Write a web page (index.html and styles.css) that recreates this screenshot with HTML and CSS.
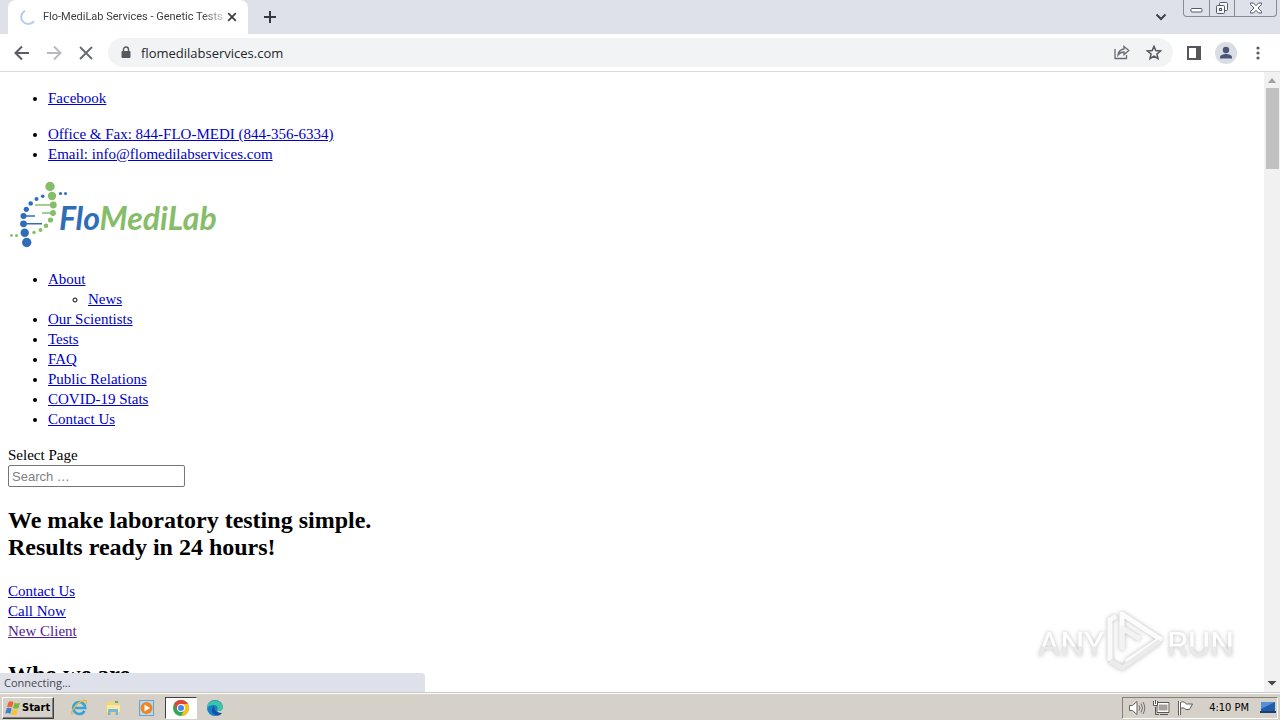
FILE: index.html
```html
<!DOCTYPE html>
<html lang="en">
<head>
<meta charset="utf-8">
<title>Flo-MediLab Services - Genetic Tests</title>
<link rel="stylesheet" href="styles.css">
</head>
<body>
<header class="tabstrip">
  <div class="tab">
    <svg class="spinner" width="16" height="16" viewBox="0 0 16 16"><path d="M5 1.8A7 7 0 1 0 14 12" fill="none" stroke="#b5cdf2" stroke-width="2"/></svg>
    <span class="tab-title">Flo-MediLab Services - Genetic Tests</span>
    <button class="icon-btn" aria-label="Close tab"><svg width="10" height="10" viewBox="0 0 10 10"><path d="M1.2 1.2l7.6 7.6M8.800 1.200l-7.600 7.600" stroke="#3c4043" stroke-width="1.8"/></svg></button>
  </div>
  <button class="icon-btn new-tab" aria-label="New tab"><svg width="12" height="12" viewBox="0 0 12 12"><path d="M6 0v12M0 6h12" stroke="#35383f" stroke-width="2"/></svg></button>
  <button class="icon-btn tab-search" aria-label="Search tabs"><svg width="12" height="8" viewBox="0 0 12 8"><path d="M1.500 1.500L6 6l4.500-4.500" fill="none" stroke="#3c4048" stroke-width="2"/></svg></button>
  <div class="window-controls">
    <button class="win-btn" aria-label="Minimize"><svg width="13" height="14" viewBox="0 0 13 14"><rect x="1" y="7.500" width="11" height="3.500" rx="1" fill="#fff" stroke="#565b66"/></svg></button>
    <button class="win-btn" aria-label="Restore"><svg width="14" height="14" viewBox="0 0 14 14"><g fill="#f4f5f8" stroke="#565b66"><rect x="4.500" y="1.500" width="8" height="8" rx="1"/><rect x="1.500" y="4.500" width="8" height="8" rx="1"/><rect x="4.500" y="7.500" width="2" height="2"/></g></svg></button>
    <button class="win-btn win-close" aria-label="Close"><svg width="14" height="12" viewBox="0 0 14 12"><path d="M1.500 1h3L7 3.700 9.500 1h3v1.500L9 6l3.500 3.500V11h-3L7 8.300 4.500 11h-3V9.500L5 6 1.500 2.500z" fill="#fff" stroke="#565b66"/></svg></button>
  </div>
</header>
<nav class="toolbar" aria-label="Browser">
  <button class="icon-btn" aria-label="Back"><svg width="16" height="16" viewBox="0 0 16 16"><path d="M15 8H2M8 1.500L1.500 8 8 14.500" fill="none" stroke="#5a5d61" stroke-width="2"/></svg></button>
  <button class="icon-btn" aria-label="Forward"><svg width="16" height="16" viewBox="0 0 16 16"><path d="M1 8h13M8 1.500L14.500 8 8 14.500" fill="none" stroke="#b8babd" stroke-width="2"/></svg></button>
  <button class="icon-btn" aria-label="Stop"><svg width="16" height="16" viewBox="0 0 16 16"><path d="M2 2l12 12M14 2L2 14" stroke="#66696d" stroke-width="1.800"/></svg></button>
  <div class="omnibox">
    <svg width="10" height="14" viewBox="0 0 10 14"><rect x="0.500" y="5" width="9" height="7" rx="1" fill="#55595e"/><path d="M2.500 6V3.500a2.500 2.500 0 0 1 5 0V6" fill="none" stroke="#55595e" stroke-width="1.400"/></svg>
    <input class="url" type="text" aria-label="Address" value="flomedilabservices.com">
    <button class="icon-btn" aria-label="Share"><svg width="16" height="16" viewBox="0 0 16 16"><path d="M1 4v9.500h11.500V10" fill="none" stroke="#686c71" stroke-width="1.300"/><path d="M10 1.500L14.800 5.500 10 9.500V7C7.500 7 5.500 8 4 10c.4-3.300 2.300-5.500 6-6z" fill="none" stroke="#686c71" stroke-width="1.300"/></svg></button>
    <button class="icon-btn" aria-label="Bookmark"><svg width="16" height="16" viewBox="0 0 16 16"><path d="M8 1.300l1.800 4.300 4.700.4-3.600 3 1.100 4.700L8 11.200l-4 2.500 1.100-4.700-3.600-3 4.700-.4z" fill="none" stroke="#55595e" stroke-width="1.500"/></svg></button>
  </div>
  <button class="icon-btn" aria-label="Side panel"><svg width="14" height="14" viewBox="0 0 14 14"><path d="M0 0h14v14H0zM2 2v10h7V2z" fill="#5a5658" fill-rule="evenodd"/></svg></button>
  <button class="icon-btn" aria-label="Profile"><svg width="22" height="22" viewBox="0 0 22 22"><circle cx="11" cy="11" r="11" fill="#dadde4"/><circle cx="11" cy="8" r="3.200" fill="#4a5577"/><path d="M5 16.500v-1.200C5 13 8.500 12 11 12s6 1 6 3.300v1.200z" fill="#4a5577"/></svg></button>
  <button class="icon-btn menu" aria-label="Menu"><svg width="4" height="14" viewBox="0 0 4 14"><g fill="#5a5d61"><circle cx="2" cy="2" r="1.600"/><circle cx="2" cy="7" r="1.600"/><circle cx="2" cy="12" r="1.600"/></g></svg></button>
</nav>
<div class="viewport">
  <main class="page">
    <ul class="list"><li><a href="#">Facebook</a></li></ul>
    <ul class="list">
      <li><a href="#">Office &amp; Fax: 844-FLO-MEDI (844-356-6334)</a></li>
      <li><a href="#">Email: info@flomedilabservices.com</a></li>
    </ul>
    <a class="logo" href="#" aria-label="FloMediLab">
      <svg width="210" height="70" viewBox="0 0 210 70">
        <g stroke-width="1.500"><path d="M27 25h18M34 33h11" stroke="#86c06c"/><path d="M15 36h12M15 43.800h19" stroke="#2f6db8"/></g>
        <g fill="#86bd68"><circle cx="42" cy="6.500" r="4.700"/><circle cx="44" cy="16" r="4.200"/><circle cx="45.300" cy="25" r="3.400"/><circle cx="45" cy="33" r="2.900"/><circle cx="42.500" cy="40" r="2.600"/><circle cx="38" cy="45.800" r="2.300"/><circle cx="32.500" cy="50" r="2"/><circle cx="26" cy="52.500" r="1.700"/><circle cx="8.500" cy="55.500" r="1.500"/><circle cx="3.500" cy="55.500" r="1.400"/></g>
        <g fill="#2f6db8"><circle cx="18.700" cy="62.500" r="4.700"/><circle cx="16.700" cy="52.700" r="4.200"/><circle cx="15.500" cy="43.800" r="3.400"/><circle cx="15.500" cy="36" r="3"/><circle cx="18.300" cy="29.300" r="2.600"/><circle cx="22.700" cy="23.500" r="2.300"/><circle cx="28.500" cy="19" r="2"/><circle cx="34.700" cy="16.300" r="1.800"/><circle cx="52.500" cy="13.500" r="1.600"/><circle cx="57.500" cy="13.500" r="1.500"/></g>
        <text class="logo-text" x="51" y="50"><tspan fill="#2f6db8">Flo</tspan><tspan fill="#86bd68">MediLab</tspan></text>
      </svg>
    </a>
    <ul class="list">
      <li><a href="#">About</a><ul><li><a href="#">News</a></li></ul></li>
      <li><a href="#">Our Scientists</a></li>
      <li><a href="#">Tests</a></li>
      <li><a href="#">FAQ</a></li>
      <li><a href="#">Public Relations</a></li>
      <li><a href="#">COVID-19 Stats</a></li>
      <li><a href="#">Contact Us</a></li>
    </ul>
    <label class="select-page" for="search">Select Page</label>
    <input class="search" id="search" type="search" placeholder="Search …">
    <h2 class="heading">We make laboratory testing simple.<br>Results ready in 24 hours!</h2>
    <div class="links">
      <a href="#">Contact Us</a>
      <a href="#">Call Now</a>
      <a class="visited" href="#">New Client</a>
    </div>
    <h2 class="heading">Who we are</h2>
  </main>
  <div class="scrollbar">
    <svg width="16" height="16" viewBox="0 0 16 16"><path d="M4 11l4-5 4 5z" fill="#a0a0a0"/></svg>
    <div class="thumb"></div>
    <svg class="scroll-down" width="16" height="16" viewBox="0 0 16 16"><path d="M3.500 5h9L8 9.500z" fill="#45484c"/></svg>
  </div>
  <div class="status">Connecting...</div>
  <svg class="watermark" width="210" height="72" viewBox="0 0 210 72" role="img" aria-label="ANY RUN">
    <defs><linearGradient id="wm" x1="0" y1="0" x2="0" y2="1"><stop offset="0.540" stop-color="#fff"/><stop offset="0.580" stop-color="#e9e9e9"/></linearGradient></defs>
    <g class="wm-text" fill="url(#wm)"><text x="8" y="50">ANY</text><text x="137" y="50">RUN</text></g>
    <g fill="none" stroke-width="5" stroke-linejoin="round"><path d="M80 55V14L86 10" stroke="#fafafa"/><path d="M92 44V8l38 25-34 23" stroke="#fcfcfc"/><path d="M80 55l12 7 38-27" stroke="#ebebeb"/><path d="M92 44V22l18 11" stroke="#f3f3f3"/></g>
  </svg>
</div>
<footer class="taskbar">
  <button class="start"><svg width="16" height="16" viewBox="0 0 16 16"><path d="M3.500 2c2-1.300 3.500-.8 5 .2L7 7.500C5.500 6.500 4 6.300 2 7.200z" fill="#ef6530"/><path d="M9.500 2.700c2 1 3.500 1 5.500 0L13.500 8c-2 1-3.500 1-5.500 0z" fill="#79b83c"/><path d="M1.700 8.300c2-1 3.500-.6 5 .3L5.300 14C4 13 2.500 12.700.3 13.600z" fill="#3d7fd1"/><path d="M7.700 9.200c2 1 3.500 1 5.400 0l-1.500 5.200c-2 1-3.500 1-5.400 0z" fill="#f8c532"/></svg>Start</button>
  <div class="launchers">
    <button class="launch" aria-label="Internet Explorer"><svg width="18" height="18" viewBox="0 0 18 18"><path d="M14.500 11.800a6 6 0 1 1 .7-2.800H5" fill="none" stroke="#35a4dc" stroke-width="2.600"/><path d="M2.500 16C-1 13.500 7 3 14 1.500c3-.5 3 1.500 1.800 3.500" fill="none" stroke="#e5b941" stroke-width="1.300"/></svg></button>
    <button class="launch" aria-label="Explorer"><svg width="18" height="18" viewBox="0 0 18 18"><path d="M2 4l6-2 2 2h5v11H2z" fill="#f1d679"/><path d="M3 6h13v7H3z" fill="#fae9a5"/><path d="M4 16v-5q0-1 1-1h8q1 0 1 1v5h-2.500v-3h-5v3z" fill="#72b9df"/><path d="M11 2h3v2h-3z" fill="#62ad66"/></svg></button>
    <button class="launch" aria-label="Media Player"><svg width="18" height="18" viewBox="0 0 18 18"><rect x="1.500" y="1.500" width="14" height="15" fill="#b8d8ed" stroke="#6aa4cc"/><circle cx="8.500" cy="9" r="6" fill="#ee8524"/><path d="M6.500 5.500l5.500 3.500-5.500 3.500z" fill="#fff"/></svg></button>
    <button class="launch active" aria-label="Chrome"><svg width="16" height="16" viewBox="0 0 16 16"><circle cx="8" cy="8" r="8" fill="#33a653"/><path d="M1.100 4A8 8 0 0 1 14.900 4L8 4.500 4.500 10z" fill="#e34335"/><path d="M14.900 4A8 8 0 0 1 8 16l3.500-6L8 4z" fill="#fbc116"/><circle cx="8" cy="8" r="4" fill="#fff"/><circle cx="8" cy="8" r="3" fill="#4285ee"/></svg></button>
    <button class="launch" aria-label="Edge"><svg width="18" height="18" viewBox="0 0 18 18"><circle cx="9" cy="9" r="8" fill="#167fcb"/><path d="M1 9C1 0 15-1 17 8c.5 4-5 5-6 3 1.500-2 0-5-3-5-3.500 0-6 1-7 3z" fill="#3cc5a5"/><path d="M8 7c-4 3-2 9 3.500 9.500 2.500 0 4-1.500 4.800-3C13 15 8 13 8 7z" fill="#174f9d"/><path d="M11 11c1 2 5 1 6-1.500l1 3-2 1.500c-3 0-5-1-5-3z" fill="#d5d0c8"/></svg></button>
  </div>
  <div class="tray">
    <svg width="18" height="16" viewBox="0 0 18 16"><path d="M1.500 5.500h3L9 1.500v13l-4.500-4h-3z" fill="#fff" stroke="#66625d"/><path d="M11 5.500q1.800 2.500 0 5M13 3.500q3 4.500 0 9M15 2q3.500 6 0 12" fill="none" stroke="#77736d"/></svg>
    <svg width="17" height="16" viewBox="0 0 17 16"><rect x="4.500" y="3.500" width="11" height="8" fill="#a5a29e" stroke="#fff" stroke-width="2"/><path d="M4 2.500h12v10H4zM7 14.500h8M2.500 7v7.500H6" fill="none" stroke="#59554f"/><path d="M.5 1v4.500h4V1M2.500 0v4" fill="#fff" stroke="#59554f"/></svg>
    <svg width="17" height="16" viewBox="0 0 17 16"><path d="M1.500 1v14.500M3.500 2v13" stroke="#605c57"/><path d="M2.500 1v14" stroke="#fff"/><path d="M3.500 2.500c3-1.500 4 0 6 1.500h6l-3 5.500H9c-2-2-3.500-2-5.500-1z" fill="#fff" stroke="#605c57"/></svg>
    <span class="clock">4:10 PM</span>
    <svg width="16" height="14" viewBox="0 0 16 14"><path d="M1 1h14v9H1z" fill="#245ca8"/><path d="M1 1h14L1 8z" fill="#548fd7"/><path d="M0 10h16v2H0z" fill="#183e78"/></svg>
  </div>
</footer>
</body>
</html>
```
FILE: styles.css
```css
* { box-sizing: border-box; }
body {
  margin: 0;
  height: 100vh;
  display: flex;
  flex-direction: column;
  overflow: hidden;
  background: #fff;
  color: #000;
  font-family: "Liberation Serif", serif;
  font-size: 15px;
  line-height: 20px;
}
button { font: inherit; color: inherit; padding: 0; border: 0; background: none; }
svg { display: block; flex: none; }
.icon-btn { display: flex; align-items: center; justify-content: center; flex: none; }

.tabstrip {
  display: flex;
  align-items: center;
  flex: none;
  height: 34px;
  padding: 0 3px 0 8px;
  background: #dee1e9;
}
.tab {
  display: flex;
  align-items: center;
  align-self: stretch;
  width: 240px;
  padding: 0 11px 0 12px;
  border-radius: 8px 8px 0 0;
  background: #fff;
}
.spinner { margin-right: 7px; }
.tab-title {
  flex: 1;
  overflow: hidden;
  white-space: nowrap;
  color: #3c4043;
  font: 11px/16px Roboto, sans-serif;
  mask-image: linear-gradient(to right, #000 88%, transparent 105%);
  margin-right: 4px;
}
.new-tab { margin-left: 16px; }
.tab-search { margin-left: auto; margin-right: 16px; }
.window-controls {
  display: flex;
  align-self: flex-start;
  height: 17px;
  border: 1px solid #868b96;
  border-top: 0;
  border-radius: 0 0 4px 4px;
}
.win-btn { display: flex; align-items: center; justify-content: center; width: 25px; }
.win-btn + .win-btn { border-left: 1px solid #868b96; }
.win-close { width: 42px; }

.toolbar {
  display: flex;
  align-items: center;
  flex: none;
  gap: 14px;
  height: 38px;
  padding: 0 20px 0 14px;
  border-bottom: 1px solid #d9dadc;
}
.toolbar > .icon-btn:nth-child(-n+2) { margin-right: 2px; }
.menu { margin-left: 5px; }
.omnibox {
  display: flex;
  align-items: center;
  flex: 1;
  gap: 16px;
  height: 29px;
  padding: 0 11px 0 13px;
  border-radius: 15px;
  background: #f1f3f5;
}
.url {
  flex: 1;
  min-width: 0;
  margin-left: -6px;
  padding: 0;
  border: 0;
  background: none;
  color: #24272b;
  font: 13px/20px "Open Sans", sans-serif;
}

.viewport { position: relative; display: flex; flex: 1; min-height: 0; }
.page { flex: 1; min-width: 0; padding: 0 8px; overflow: hidden; }
.list { margin: 16px 0; padding-left: 40px; }
.list ul { padding-left: 40px; margin: 0; }
a { color: #0000c8; }
.visited { color: #551a8b; }
.logo { display: block; height: 73px; }
.logo-text { font: italic bold 32px Lato, sans-serif; }
.select-page { display: block; }
.search {
  display: block;
  width: 177px;
  height: 22px;
  padding: 1px 3px;
  border: 1px solid #767676;
  border-radius: 2px;
  font: 13px "Liberation Sans", sans-serif;
  appearance: none;
}
.search::placeholder { color: #808080; }
.heading { margin: 20px 0; font-size: 24px; line-height: 27px; }
.links { display: flex; flex-direction: column; align-items: flex-start; }

.scrollbar { display: flex; flex-direction: column; width: 16px; background: #f1f1f1; }
.thumb { height: 81px; margin: 0 1px 0 2px; background: #c1c1c1; }
.scroll-down { margin-top: auto; }
.status {
  position: absolute;
  left: 0;
  bottom: 0;
  width: 425px;
  height: 19px;
  padding: 0 4px;
  border-radius: 0 4px 0 0;
  background: #dee1e9;
  color: #45484d;
  font: 11px/20px "Open Sans", sans-serif;
}
.watermark {
  position: absolute;
  right: 40px;
  bottom: 14px;
  filter: drop-shadow(0 0 2px #bbb);
}
.wm-text { font: 34px Roboto, sans-serif; }

.taskbar {
  display: flex;
  align-items: center;
  flex: none;
  height: 28px;
  padding: 2px 2px 0;
  border-top: 1px solid #c9c8c1;
  background: #d5d0c8;
  box-shadow: inset 0 1px #fff;
  font: 11px/16px "DejaVu Sans Condensed", "DejaVu Sans", sans-serif;
}
.start {
  display: flex;
  align-items: center;
  gap: 1px;
  height: 22px;
  padding: 0 3px 0 2px;
  border: 1px solid;
  border-color: #fff #404040 #404040 #fff;
  box-shadow: inset -1px -1px #808080;
  font-weight: bold;
}
.launchers { display: flex; gap: 2px; margin-left: 9px; }
.launch { display: flex; align-items: center; justify-content: center; width: 32px; height: 22px; }
.launch.active { border: 1px solid; border-color: #404040 #fff #fff #404040; background: #fff; }
.tray {
  display: flex;
  align-items: center;
  gap: 7px;
  height: 22px;
  margin-left: auto;
  padding: 0 1px 0 5px;
  border: 1px solid;
  border-color: #808080 #fff #fff #808080;
}
.clock { margin: 0 4px 0 8px; }
```
